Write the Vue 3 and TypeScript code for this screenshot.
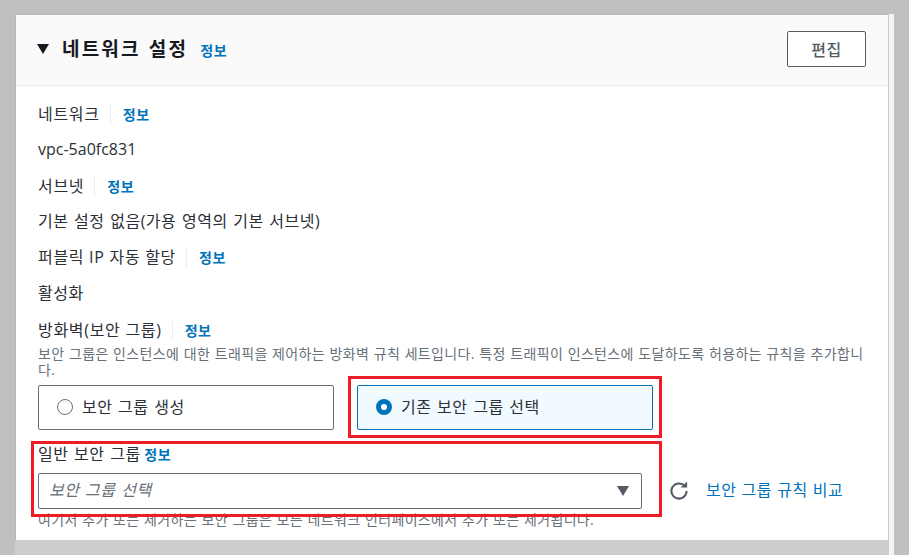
<script setup lang="ts">
interface Field { label: string; value: string; latin?: boolean }
const fields: Field[] = [
  { label: '네트워크', value: 'vpc-5a0fc831', latin: true },
  { label: '서브넷', value: '기본 설정 없음(가용 영역의 기본 서브넷)' },
  { label: '퍼블릭 IP 자동 할당', value: '활성화' },
]
</script>

<template>
  <div class="page">
    <div class="shell">
      <section class="card">
        <header class="head">
          <svg class="caret" width="12" height="10" viewBox="0 0 12 10"><path d="M0 0h12L6 10z" fill="#16191f" /></svg>
          <h2 class="title">네트워크 설정</h2>
          <a class="info title-info">정보</a>
          <button class="edit">편집</button>
        </header>
        <div class="body">
          <div v-for="f in fields" :key="f.label" class="field">
            <div class="label-row">
              <span class="label">{{ f.label }}</span>
              <span class="sep"></span>
              <a class="info">정보</a>
            </div>
            <div class="value" :class="{ latin: f.latin }">{{ f.value }}</div>
          </div>
          <div class="label-row fw">
            <span class="label">방화벽(보안 그룹)</span>
            <span class="sep"></span>
            <a class="info">정보</a>
          </div>
          <p class="desc">보안 그룹은 인스턴스에 대한 트래픽을 제어하는 방화벽 규칙 세트입니다. 특정 트래픽이 인스턴스에 도달하도록 허용하는 규칙을 추가합니다.</p>
          <div class="tiles">
            <div class="tile">
              <span class="radio"></span>
              <span class="tile-text">보안 그룹 생성</span>
            </div>
            <div class="tile on">
              <span class="radio on"></span>
              <span class="tile-text">기존 보안 그룹 선택</span>
            </div>
          </div>
          <div class="sg-label">일반 보안 그룹 <a class="info sg-info">정보</a></div>
          <div class="sg-row">
            <div class="select">
              <span class="placeholder">보안 그룹 선택</span>
              <svg width="12" height="10" viewBox="0 0 12 10"><path d="M0 0h12L6 10z" fill="#545b64" /></svg>
            </div>
            <svg class="refresh" width="20" height="20" viewBox="0 0 20 20" fill="none">
              <path d="M15.9 5.2A7.6 7.6 0 1 0 17.6 10" stroke="#545b64" stroke-width="2" />
              <path d="M11.5 6.6h6.6V0.6z" fill="#545b64" />
            </svg>
            <a class="compare">보안 그룹 규칙 비교</a>
          </div>
          <p class="hint">여기서 추가 또는 제거하는 보안 그룹은 모든 네트워크 인터페이스에서 추가 또는 제거됩니다.</p>
        </div>
        <div class="mark mark-a"></div>
        <div class="mark mark-b"></div>
      </section>
    </div>
  </div>
</template>

<style>
html, body { margin: 0; background: #c0c0c0; }
</style>

<style scoped>
.page {
  width: 909px;
  height: 555px;
  box-sizing: border-box;
  padding: 14px 15px 0;
  background: #c0c0c0;
  overflow: hidden;
  font-family: "Open Sans", "Noto Sans CJK KR", sans-serif;
  color: #2b2f36;
}
.shell {
  width: 879px;
  height: 541px;
  background: #ccc;
  display: flex;
  flex-direction: column;
  box-shadow: inset -5px 0 0 #f2f3f3;
}
.card {
  position: relative;
  width: 874px;
  height: 526px;
  box-sizing: border-box;
  background: #fff;
  border-top: 1px solid #b5b5b5;
  border-left: 1px solid #b5b5b5;
  border-right: 1px solid #ccc;
  overflow: hidden;
}
.head {
  height: 71px;
  box-sizing: border-box;
  background: #fafafa;
  border-bottom: 1px solid #eaeded;
  display: flex;
  align-items: center;
  padding: 0 22px 2px 21px;
}
.caret { margin-right: 13px; }
.title { margin: 0; font-size: 19px; font-weight: 700; line-height: 26px; letter-spacing: 2.2px; word-spacing: 1px; color: #16191f; }
.info { font-size: 14px; font-weight: 700; color: #0073bb; letter-spacing: 0.6px; }
.title-info { margin-left: 12px; margin-top: 1px; }
.sg-info { margin-left: -2px; }
.edit {
  margin-left: auto;
  width: 79px;
  height: 36px;
  box-sizing: border-box;
  background: #fff;
  border: 1px solid #545b64;
  border-radius: 2px;
  font: 500 16px "Noto Sans CJK KR", sans-serif;
  letter-spacing: 0.5px;
  color: #545b64;
  padding: 0;
}
.body { padding: 19px 22px 0; }
.field { height: 71.5px; }
.label-row { display: flex; align-items: center; height: 19px; font-size: 16px; line-height: 19px; }
.label { letter-spacing: 0.7px; }
.sep { width: 1px; height: 19px; background: #eaeded; margin: 0 12px 0 10px; }
.value { margin-top: 16.5px; font-size: 16px; line-height: 19px; letter-spacing: 0.5px; word-spacing: 1px; }
.value.latin { margin-top: 16px; letter-spacing: 0; }
.fw { margin-top: 1px; }
.desc {
  margin: 6px 0 0;
  font-size: 14px;
  line-height: 16px;
  color: #687078;
  letter-spacing: 0.35px;
  word-spacing: 0.5px;
}
.tiles { display: flex; gap: 23px; width: 615px; margin-top: 7px; }
.tile {
  width: 296px;
  height: 45px;
  box-sizing: border-box;
  border: 1px solid #687078;
  border-radius: 2px;
  display: flex;
  align-items: center;
  gap: 9px;
  padding: 0 0 0 18px;
  font-size: 16px;
  letter-spacing: 0.5px;
  word-spacing: 1px;
}
.tile-text { margin-top: -2px; }
.tile.on { border-color: #0073bb; background: #f1faff; }
.radio {
  width: 16px;
  height: 16px;
  box-sizing: border-box;
  border: 1px solid #687078;
  border-radius: 50%;
  background: #fff;
}
.radio.on { border: 5px solid #0073bb; }
.sg-label { margin-top: 15px; font-size: 16px; line-height: 19px; letter-spacing: 0.5px; word-spacing: 1px; }
.sg-row { display: flex; align-items: center; margin-top: 9px; }
.select {
  width: 604px;
  height: 36px;
  box-sizing: border-box;
  border: 1px solid #687078;
  border-radius: 2px;
  display: flex;
  align-items: center;
  justify-content: space-between;
  padding: 0 12px 0 10px;
}
.placeholder { margin-top: -4px; font-size: 16px; font-style: italic; color: #687078; letter-spacing: 0.5px; word-spacing: 1px; }
.refresh { margin-left: 27px; }
.compare { margin-left: 17px; margin-top: -4px; font-size: 16px; color: #0073bb; letter-spacing: 0.5px; word-spacing: 0.5px; }
.hint { margin: 3px 0 0; font-size: 14px; line-height: 16px; color: #687078; letter-spacing: 0.35px; word-spacing: 0.5px; }
.mark { position: absolute; box-sizing: border-box; border: 3px solid #ee1c25; pointer-events: none; }
.mark-a { left: 332px; top: 361px; width: 314px; height: 62px; }
.mark-b { left: 15px; top: 426px; width: 631px; height: 76px; }
</style>
